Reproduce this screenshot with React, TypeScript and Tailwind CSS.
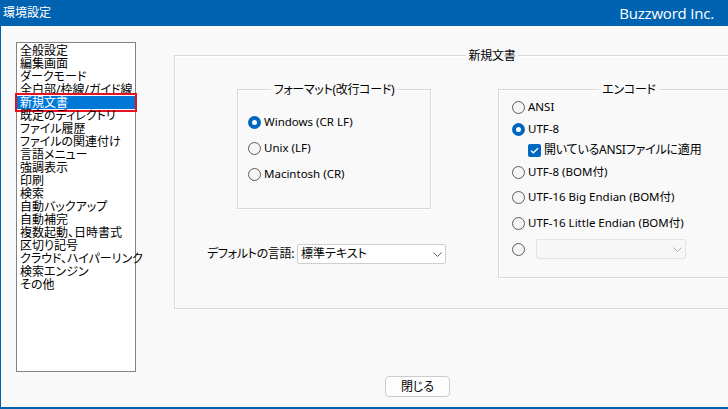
import React from "react";

const jp = "[font-family:'Noto_Sans','Noto_Sans_CJK_JP',sans-serif] [font-feature-settings:'palt']";

const items = [
  "全般設定",
  "編集画面",
  "ダークモード",
  "全白部/枠線/ガイド線",
  "新規文書",
  "既定のディレクトリ",
  "ファイル履歴",
  "ファイルの関連付け",
  "言語メニュー",
  "強調表示",
  "印刷",
  "検索",
  "自動バックアップ",
  "自動補完",
  "複数起動、日時書式",
  "区切り記号",
  "クラウド、ハイパーリンク",
  "検索エンジン",
  "その他",
];

function Radio({ checked }: { checked?: boolean }) {
  if (checked) {
    return (
      <span className="w-[13px] h-[13px] rounded-full bg-[#0067c0] flex items-center justify-center shrink-0">
        <span className="w-[5px] h-[5px] rounded-full bg-white" />
      </span>
    );
  }
  return <span className="w-[13px] h-[13px] rounded-full border border-[#5c5c5c] bg-[#f5f5f5] shrink-0" />;
}

function Chevron({ color = "#606060" }: { color?: string }) {
  return (
    <svg width="9" height="5" viewBox="0 0 9 5" fill="none">
      <path d="M0.5 0.5 L4.5 4.5 L8.5 0.5" stroke={color} strokeWidth="1" />
    </svg>
  );
}

function Group({ label, className, children }: { label: string; className: string; children?: React.ReactNode }) {
  return (
    <div className={"relative border border-[#d8d8d8] shadow-[inset_1px_1px_0_#ffffff,1px_1px_0_#ffffff] " + className}>
      <div className="absolute left-0 right-0 -top-[8px] flex justify-center">
        <span className="bg-[#f9f9f9] px-[3px] text-[12px] leading-[15px] tracking-[-0.3px] text-black">{label}</span>
      </div>
      {children}
    </div>
  );
}

function RadioRow({ checked, label, h }: { checked?: boolean; label: string; h: string }) {
  return (
    <div className={"flex items-center gap-[3px] " + h}>
      <Radio checked={checked} />
      <span className="text-[11.5px] leading-[14px] text-black">{label}</span>
    </div>
  );
}

export default function App() {
  return (
    <div className={"w-[728px] h-[409px] overflow-hidden bg-[#f9f9f9] flex flex-col border-l border-[#0063b1] border-b-2 " + jp}>
      <div className="h-[26px] bg-[#0063b1] flex items-center justify-between pl-[3px] pr-[14px] text-white shrink-0 -ml-px">
        <span className="text-[12px]">環境設定</span>
        <span className="text-[15px] tracking-[-0.2px] [font-family:'Open_Sans','Noto_Sans',sans-serif]">Buzzword Inc.</span>
      </div>
      <div className="flex-1 flex pl-[15px] pt-[16px]">
        <div className="w-[120px] h-[330px] border border-[#838383] bg-white pt-px shrink-0">
          {items.map((t) => {
            const sel = t === "新規文書";
            return (
              <div
                key={t}
                className={
                  "relative h-[13px] leading-[13px] text-[12px] pl-[3px] whitespace-nowrap overflow-visible " +
                  (sel ? "bg-[#0078d7] text-white" : "text-black")
                }
              >
                {t}
                {sel && <div className="absolute -top-[3px] -bottom-[3px] -left-[2px] -right-[2px] border-2 border-[#e81123]" />}
              </div>
            );
          })}
        </div>
        <div className="ml-[38px] mt-[13px] flex flex-col shrink-0">
          <Group label="新規文書" className="w-[636px] h-[254px]">
            <div className="flex pt-[33px] pl-[32px]">
              <div className="w-[239px] flex flex-col">
                <Group label="フォーマット(改行コード)" className="ml-[30px] w-[194px] h-[120px]">
                  <div className="pt-[19px] pl-[10px] flex flex-col">
                    <RadioRow checked label="Windows (CR LF)" h="h-[26px]" />
                    <RadioRow label="Unix (LF)" h="h-[26px]" />
                    <RadioRow label="Macintosh (CR)" h="h-[26px]" />
                  </div>
                </Group>
                <div className="mt-[35px] flex items-center">
                  <span className="text-[12px] w-[90px] tracking-[-0.3px]">デフォルトの言語:</span>
                  <div className="w-[149px] h-[20px] bg-white border border-[#cfcfcf] rounded-[2px] flex items-center justify-between pl-[3px] pr-[3px]">
                    <span className="text-[12px] leading-[14px]">標準テキスト</span>
                    <Chevron />
                  </div>
                </div>
              </div>
              <Group label="エンコード" className="ml-[52px] w-[262px] h-[189px]">
                <div className="pt-[6px] pl-[13px] flex flex-col">
                  <RadioRow label="ANSI" h="h-[22px]" />
                  <RadioRow checked label="UTF-8" h="h-[22px]" />
                  <div className="h-[20px] flex items-center gap-[3px] pl-[16px]">
                    <span className="w-[13px] h-[13px] rounded-[2px] bg-[#0067c0] flex items-center justify-center shrink-0">
                      <svg width="9" height="7" viewBox="0 0 9 7" fill="none">
                        <path d="M1 3.6 L3.3 5.8 L8 1.2" stroke="#ffffff" strokeWidth="1.3" />
                      </svg>
                    </span>
                    <span className="text-[12px] leading-[14px] tracking-[-0.2px]">開いているANSIファイルに適用</span>
                  </div>
                  <RadioRow label="UTF-8 (BOM付)" h="h-[24px]" />
                  <RadioRow label="UTF-16 Big Endian (BOM付)" h="h-[26px]" />
                  <RadioRow label="UTF-16 Little Endian (BOM付)" h="h-[26px]" />
                  <div className="h-[26px] flex items-center">
                    <Radio />
                    <div className="ml-[11px] w-[150px] h-[20px] border border-[#e3e3e3] bg-[#f7f7f7] rounded-[2px] flex items-center justify-end pr-[3px]">
                      <Chevron color="#b0b0b0" />
                    </div>
                  </div>
                </div>
              </Group>
            </div>
          </Group>
          <div className="mt-[67px] ml-[211px] w-[65px] h-[21px] border border-[#cccccc] rounded-[4px] bg-[#fdfdfd] flex items-center justify-center text-[12px]">
            閉じる
          </div>
        </div>
      </div>
    </div>
  );
}
